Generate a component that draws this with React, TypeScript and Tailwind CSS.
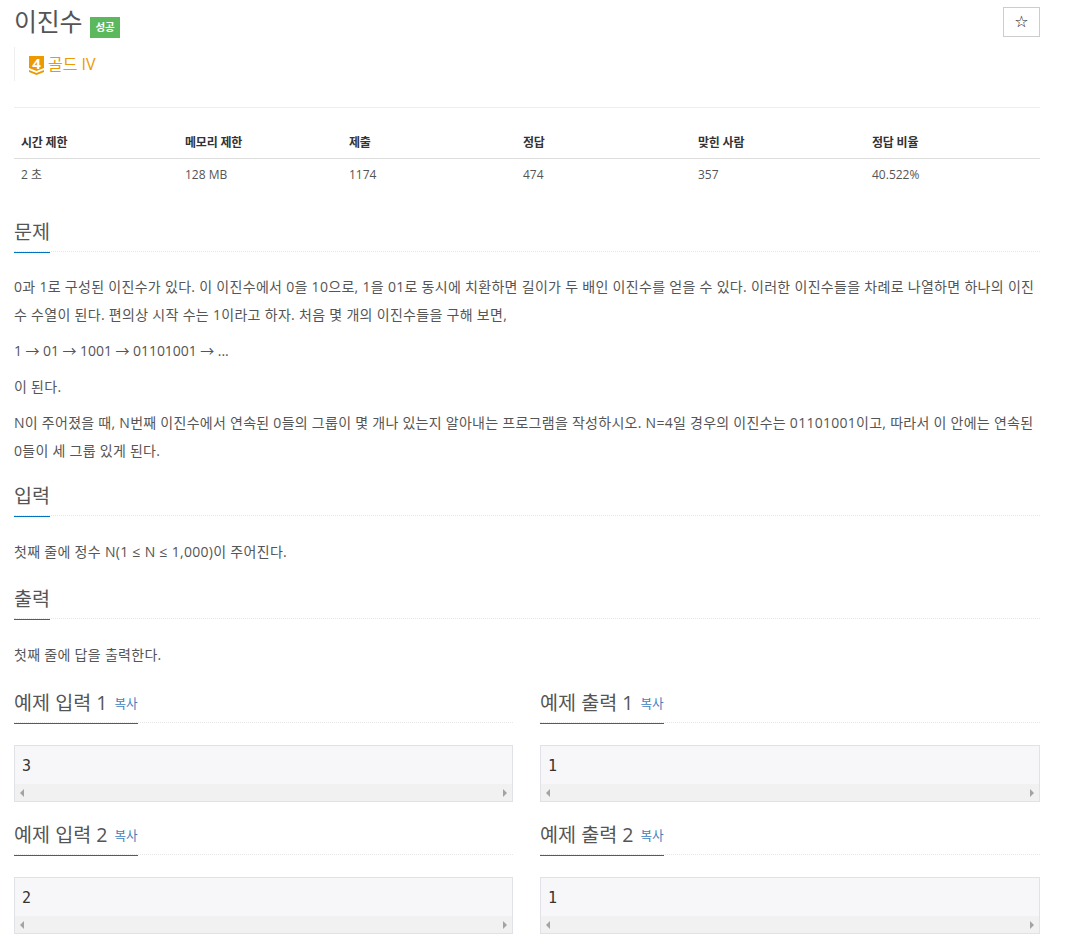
import React from 'react';

const FONT = "font-['Open_Sans','Noto_Sans_CJK_KR',sans-serif]";

// the blue rule sits one pixel below the dotted one
const Headline = ({ children, extra }: { children: React.ReactNode; extra?: React.ReactNode }) => (
  <div className="border-b border-dotted border-[#e6e6e6] h-[36px] flex">
    <div className="h-[37px] border-b border-[#0076c0] flex items-start">
      <h2 className="text-[19.6px] leading-[32px] text-[#555]">{children}</h2>
      {extra}
    </div>
  </div>
);

const SampleBox = ({ title, value }: { title: string; value: string }) => (
  <div className="flex flex-col">
    <Headline extra={<span className="text-[12.6px] leading-[33px] text-[#3f7fc0] ml-[7px]">복사</span>}>{title}</Headline>
    <div className="mt-[22px] border border-[#e1e1e8] bg-[#f7f7f9] h-[57px] flex flex-col">
      <pre className="flex-1 px-[7px] pt-[10px] text-[15px] leading-5 text-[#333] font-['DejaVu_Sans_Mono',monospace]">{value}</pre>
      <div className="h-[17px] bg-[#f1f1f1] flex items-center justify-between px-[5px]">
        <span className="w-0 h-0 border-y-4 border-y-transparent border-r-4 border-r-[#a3a3a3]" />
        <span className="w-0 h-0 border-y-4 border-y-transparent border-l-4 border-l-[#a3a3a3]" />
      </div>
    </div>
  </div>
);

export default function App() {
  const cols = ['w-[164px]', 'w-[164px]', 'w-[174px]', 'w-[175px]', 'w-[174px]', 'w-[175px]'];
  const heads = ['시간 제한', '메모리 제한', '제출', '정답', '맞힌 사람', '정답 비율'];
  const vals = ['2 초', '128 MB', '1174', '474', '357', '40.522%'];

  return (
    <div className={`${FONT} w-[1077px] h-[948px] overflow-hidden bg-white text-[14px] text-[#333] pl-[14px] pr-[37px]`}>
      {/* title */}
      <div className="flex justify-between pt-[7px]">
        <div className="flex items-start">
          <h1 className="text-[25px] leading-[28px] text-[#555] tracking-[-0.3px]">이진수</h1>
          <span className="ml-[8px] mt-[10px] w-[30px] h-[21px] bg-[#5cb85c] text-white text-[10.5px] font-bold flex items-center justify-center">성공</span>
        </div>
        <button className="w-[37px] h-[30px] border border-[#ccc] text-[#222] text-[16px] leading-[16px] font-['DejaVu_Sans',sans-serif] flex items-center justify-center">☆</button>
      </div>
      <div className="mt-[9px] h-[34px] border-l border-[#eee] pl-[14px] flex items-center gap-[4px] text-[16px] text-[#ec9a00]">
        <span className="relative mt-[3px] w-[15px] h-[19px]">
          <svg className="block" width="15" height="19" viewBox="0 0 15 19">
            <path d="M0 0H15V12L7.5 15L0 12Z" fill="#ec9a00" />
            <path d="M0 14L7.5 17L15 14V16L7.5 19L0 16Z" fill="#ec9a00" />
          </svg>
          <span className="absolute inset-x-0 top-0 text-center text-white font-bold text-[15px] leading-[14px]">4</span>
        </span>
        <span>골드 IV</span>
      </div>
      <div className="mt-[26px] border-t border-[#eee]" />

      {/* limits */}
      <div className="mt-[20px] flex h-[31px] border-b border-[#ddd] text-[12px] font-bold text-[#333] tracking-[-0.2px]">
        {heads.map((h, i) => (
          <div key={h} className={`${cols[i]} pl-[7px] leading-[30px]`}>{h}</div>
        ))}
      </div>
      <div className="flex h-[31px] text-[12px] text-[#555]">
        {vals.map((v, i) => (
          <div key={v} className={`${cols[i]} pl-[7px] leading-[31px]`}>{v}</div>
        ))}
      </div>

      <div className="mt-[26px]">
        <Headline>문제</Headline>
        <div className="mt-[21px] text-[#555]">
          <p className="leading-[28px] mb-2 tracking-[0.3px]">0과 1로 구성된 이진수가 있다. 이 이진수에서 0을 10으로, 1을 01로 동시에 치환하면 길이가 두 배인 이진수를 얻을 수 있다. 이러한 이진수들을 차례로 나열하면 하나의 이진수 수열이 된다. 편의상 시작 수는 1이라고 하자. 처음 몇 개의 이진수들을 구해 보면,</p>
          <p className="leading-[28px] mb-2 tracking-[-0.05px]">1 → 01 → 1001 → 01101001 → ...</p>
          <p className="leading-[28px] mb-2 tracking-[0.3px]">이 된다.</p>
          <p className="leading-[28px] tracking-[0.27px]">N이 주어졌을 때, N번째 이진수에서 연속된 0들의 그룹이 몇 개나 있는지 알아내는 프로그램을 작성하시오. N=4일 경우의 이진수는 01101001이고, 따라서 이 안에는 연속된 0들이 세 그룹 있게 된다.</p>
        </div>
      </div>

      <div className="mt-[15px]">
        <Headline>입력</Headline>
        <p className="mt-[22px] leading-[28px] text-[#555] tracking-[0.3px]">첫째 줄에 정수 N(1 ≤ N ≤ 1,000)이 주어진다.</p>
      </div>
      <div className="mt-[17px]">
        <Headline>출력</Headline>
        <p className="mt-[22px] leading-[28px] text-[#555] tracking-[0.3px]">첫째 줄에 답을 출력한다.</p>
      </div>

      <div className="mt-[18px] grid grid-cols-[499px_500px] gap-x-[27px] gap-y-[17px]">
        <SampleBox title="예제 입력 1" value="3" />
        <SampleBox title="예제 출력 1" value="1" />
        <SampleBox title="예제 입력 2" value="2" />
        <SampleBox title="예제 출력 2" value="1" />
      </div>
    </div>
  );
}
